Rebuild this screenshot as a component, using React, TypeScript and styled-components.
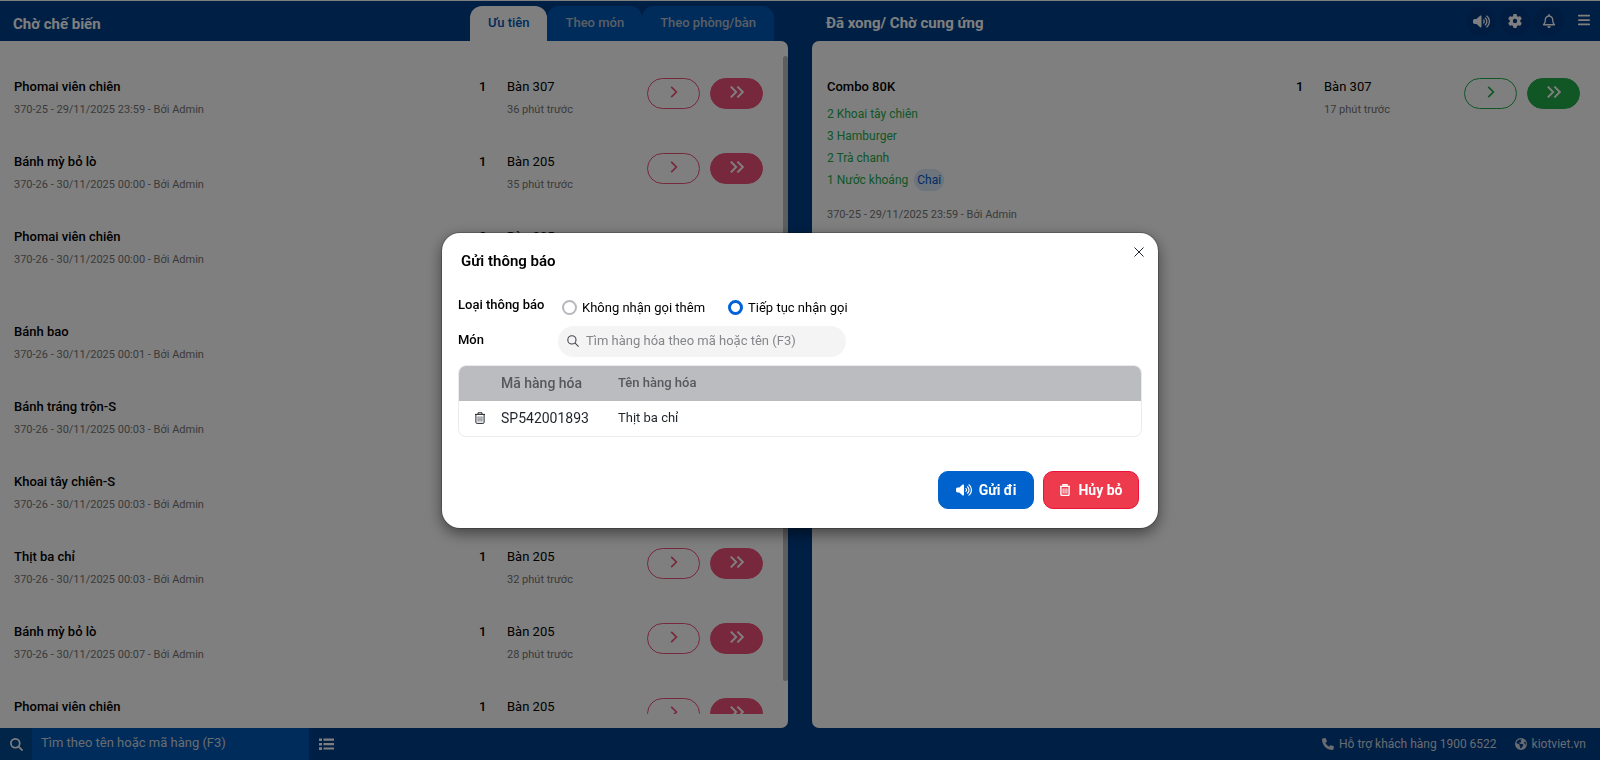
import React from 'react';
import styled, { createGlobalStyle, css } from 'styled-components';
import {
  FaBars,
  FaEarthAmericas,
  FaGear,
  FaPhone,
  FaRegBell,
  FaVolumeHigh,
} from 'react-icons/fa6';

const GlobalStyle = createGlobalStyle`
  *, *::before, *::after { box-sizing: border-box; }
  html, body, #root { height: 100%; }
  body {
    margin: 0;
    font-family: Roboto, "Liberation Sans", sans-serif;
    font-size: 13px;
    line-height: 20px;
    color: #000;
    background: #003e8a;
  }
  button, input { font: inherit; }
  button { padding: 0; border: 0; background: none; cursor: pointer; }
  h1, h2, h3, p, ul { margin: 0; padding: 0; }
  svg { display: block; flex: none; }
`;

const Page = styled.div`
  display: flex;
  flex-direction: column;
  height: 100vh;
  border-top: 1px solid #fff;
  overflow: hidden;
`;

const Columns = styled.main`
  flex: 1;
  min-height: 0;
  display: grid;
  grid-template-columns: 1fr 1fr;
  gap: 24px;
`;

const Column = styled.section`
  display: flex;
  flex-direction: column;
  min-width: 0;
  min-height: 0;
`;

const Header = styled.header<{ $side: 'left' | 'right' }>`
  flex: none;
  height: 40px;
  display: flex;
  align-items: center;
  justify-content: space-between;
  padding: ${(p) => (p.$side === 'left' ? '5px 14px 0 13px' : '0 8px 0 14px')};
`;

const Heading = styled.h1<{ $side: 'left' | 'right' }>`
  padding-top: ${(p) => (p.$side === 'left' ? '0' : '3px')};
  font-size: 15px;
  font-weight: 700;
  color: #fff;
`;

const Tabs = styled.div`
  display: flex;
  align-self: stretch;
`;

const Tab = styled.button<{ $active?: boolean }>`
  padding: 0 18px 2px;
  border-radius: 12px 12px 0 0;
  font-weight: 500;
  color: ${(p) => (p.$active ? '#0058b6' : '#b4bfcc')};
  background: ${(p) => (p.$active ? '#fff' : '#0058b6')};
`;

const HeaderTools = styled.div`
  display: flex;
  align-items: center;
  gap: 4px;
`;

const RoundTool = styled.button`
  display: grid;
  place-items: center;
  width: 30px;
  height: 30px;
  border-radius: 50%;
  color: #fff;
  background: #003a82;
`;

const MenuTool = styled.button`
  display: grid;
  place-items: center;
  width: 16px;
  height: 30px;
  padding-bottom: 3px;
  margin-left: 8px;
  color: #fff;
`;

const Panel = styled.div<{ $side: 'left' | 'right' }>`
  flex: 1;
  min-height: 0;
  display: flex;
  padding: 15px 0 14px;
  background: #fff;
  border-radius: ${(p) => (p.$side === 'left' ? '0 7px 7px 0' : '7px 0 0 7px')};
`;

const Orders = styled.ul<{ $side: 'left' | 'right' }>`
  flex: 1;
  min-width: 0;
  overflow: hidden;
  list-style: none;
  padding: 11px 0 0 ${(p) => (p.$side === 'left' ? '14px' : '15px')};
`;

const ScrollTrack = styled.div`
  flex: none;
  width: 5px;
`;

const ScrollThumb = styled.div`
  height: 95%;
  border-radius: 3px;
  background: #bdbdbd;
`;

const Order = styled.li<{ $tall?: boolean }>`
  display: flex;
  align-items: flex-start;
  min-height: ${(p) => (p.$tall ? '95px' : '75px')};
  padding-top: 10px;
`;

const Dish = styled.div`
  flex: 1;
  min-width: 0;
`;

const Name = styled.h3`
  font-size: 13px;
  font-weight: 500;
`;

const Meta = styled.p`
  margin-top: 3px;
  font-size: 11px;
  color: #757575;
`;

const Quantity = styled.div`
  width: 28px;
  font-weight: 500;
`;

const Place = styled.div`
  width: 140px;
`;

const Actions = styled.div<{ $tall?: boolean }>`
  display: flex;
  gap: 10px;
  padding-top: ${(p) => (p.$tall ? '11px' : '1px')};
  padding-right: 20px;
`;

const tones = { pink: '#f0507a', green: '#22ac4b' };

const Pill = styled.button<{ $tone: 'pink' | 'green'; $filled?: boolean }>`
  display: grid;
  place-items: center;
  width: 53px;
  height: 31px;
  padding-bottom: 4px;
  border-radius: 16px;
  border: 1px solid ${(p) => tones[p.$tone]};
  color: ${(p) => (p.$filled ? '#fff' : tones[p.$tone])};
  background: ${(p) => (p.$filled ? tones[p.$tone] : 'transparent')};
`;

const ComboItems = styled.ul`
  list-style: none;
  padding-top: 6px;
  font-size: 12px;
  color: #22ac4b;
`;

const ComboItem = styled.li`
  display: flex;
  align-items: center;
  gap: 6px;
  min-height: 22px;
`;

const Unit = styled.span`
  padding: 0 3px;
  border-radius: 11px;
  line-height: 22px;
  color: #0058c8;
  background: #dce8f8;
`;

const ComboMeta = styled(Meta)`
  margin-top: 14px;
`;

const Footer = styled.footer`
  flex: none;
  height: 32px;
  display: flex;
  align-items: center;
  color: #fff;
`;

const FooterSearch = styled.label`
  display: flex;
  align-self: stretch;
  width: 309px;
  background: #004a90;
`;

const FooterSearchIcon = styled.span`
  display: grid;
  place-items: center;
  width: 32px;
`;

const FooterInput = styled.input`
  flex: 1;
  min-width: 0;
  padding: 0 9px 2px;
  border: 0;
  outline: 0;
  color: #fff;
  background: #0058b6;
  &::placeholder { color: #d2d8e0; opacity: 1; }
`;

const ListButton = styled.button`
  margin-left: 10px;
  color: #fff;
`;

const Support = styled.div`
  margin-left: auto;
  padding-right: 14px;
  display: flex;
  gap: 18px;
  font-size: 12px;
`;

const SupportLink = styled.a`
  display: flex;
  align-items: center;
  gap: 5px;
  color: #d2d8e0;
  text-decoration: none;
`;

const Backdrop = styled.div`
  position: fixed;
  inset: 0;
  display: grid;
  place-items: center;
  background: rgba(0, 0, 0, 0.5);
`;

const Dialog = styled.div`
  position: relative;
  width: 716px;
  max-width: 100%;
  padding: 18px 16px 19px;
  border-radius: 18px;
  background: #fff;
  box-shadow: 0 0 0 1px rgba(0, 0, 0, 0.2), 0 5px 15px rgba(0, 0, 0, 0.5);
`;

const DialogTitle = styled.h2`
  padding-left: 3px;
  font-size: 15px;
  font-weight: 600;
  line-height: 20px;
`;

const Close = styled.button`
  position: absolute;
  top: 11px;
  right: 11px;
  padding: 3px;
`;

const Field = styled.div`
  display: flex;
  align-items: flex-start;
`;

const FieldName = styled.span`
  width: 100px;
  font-weight: 500;
`;

const KindField = styled(Field)`
  margin-top: 24px;
`;

const SearchField = styled(Field)`
  margin-top: 8px;
  line-height: 28px;
`;

const Choices = styled.div`
  display: flex;
  gap: 23px;
  padding: 3px 0 0 4px;
`;

const Choice = styled.label`
  display: flex;
  align-items: center;
  gap: 5px;
`;

const Radio = styled.input`
  appearance: none;
  width: 15px;
  height: 15px;
  margin: 0;
  border: 2px solid #b7b8bc;
  border-radius: 50%;
  background: #fff;
  &:checked { border: 3px solid #0062d6; }
`;

const SearchBox = styled.label`
  display: flex;
  align-items: center;
  gap: 7px;
  width: 288px;
  height: 31px;
  padding: 0 9px;
  border-radius: 16px;
  color: #43464d;
  background: #f4f4f4;
`;

const SearchInput = styled.input`
  flex: 1;
  min-width: 0;
  padding: 0 0 1px;
  border: 0;
  outline: 0;
  background: none;
  &::placeholder { color: #85868b; opacity: 1; }
`;

const TableFrame = styled.div`
  margin-top: 8px;
  border: 1px solid #ebebed;
  border-radius: 8px;
  overflow: hidden;
`;

const Table = styled.table`
  width: 100%;
  border-collapse: collapse;
  table-layout: fixed;
  color: #1f242b;
  th, td { height: 35px; padding: 0; text-align: left; }
  th { font-weight: 500; color: #55585e; background: #bbbcc0; }
`;

const codeText = css`
  width: 117px;
  font-size: 14px;
`;

const IconHead = styled.th`
  width: 42px;
`;

const CodeHead = styled.th`
  ${codeText}
`;

const CodeCell = styled.td`
  ${codeText}
`;

const RemoveButton = styled.button`
  display: block;
  margin-left: 15px;
  color: #1f242b;
`;

const DialogActions = styled.div`
  display: flex;
  justify-content: flex-end;
  gap: 9px;
  margin-top: 34px;
  padding-right: 3px;
`;

const ActionButton = styled.button<{ $danger?: boolean }>`
  display: flex;
  align-items: center;
  justify-content: center;
  gap: 7px;
  width: 96px;
  height: 38px;
  border: 1px solid ${(p) => (p.$danger ? '#ec1237' : '#0062cc')};
  border-radius: 10px;
  font-size: 14px;
  font-weight: 700;
  color: #fff;
  background: ${(p) => (p.$danger ? '#ee3a4d' : '#0062cc')};
`;

const ChevronIcon = () => (
  <svg width="8" height="12" viewBox="0 0 8 12" fill="none" stroke="currentColor" strokeWidth="1.7" aria-hidden>
    <path d="M1.2 0.8 6.4 6 1.2 11.2" />
  </svg>
);

const DoubleChevronIcon = () => (
  <svg width="14" height="12" viewBox="0 0 14 12" fill="none" stroke="currentColor" strokeWidth="1.9" aria-hidden>
    <path d="M0.8 0.6 6.2 6 0.8 11.4M7.4 0.6 12.8 6 7.4 11.4" />
  </svg>
);

const ListIcon = () => (
  <svg width="15" height="12" viewBox="0 0 15 12" fill="currentColor" aria-hidden>
    <path d="M0 0.5h3v2.6H0zM0 4.9h3v2.6H0zM0 9.3h3v2.6H0zM4.5 0.6h10.5v2.2H4.5zM4.5 5h10.5v2.2H4.5zM4.5 9.4h10.5v2.2H4.5z" />
  </svg>
);

const TrashIcon = ({ size = 12, weight = 1 }: { size?: number; weight?: number }) => (
  <svg width={size} height={size} viewBox="0 0 12 12" fill="none" stroke="currentColor" strokeWidth={weight} aria-hidden>
    <path d="M1 2.4h10M4 2.2V0.8h4v1.4M1.9 2.6v7.6q0 1.2 1.2 1.2h5.8q1.2 0 1.2-1.2V2.6" />
    <path d="M4.1 4.4v5.2M6 4.4v5.2M7.9 4.4v5.2" strokeWidth={weight * 0.7} />
  </svg>
);

const CloseIcon = () => (
  <svg width="10" height="10" viewBox="0 0 10 10" fill="none" stroke="#1f242b" strokeWidth="1" aria-hidden>
    <path d="M0.5 0.5 9.5 9.5M9.5 0.5 0.5 9.5" />
  </svg>
);

const SearchIcon = ({ size = 12, weight = 1.1 }: { size?: number; weight?: number }) => (
  <svg width={size} height={size} viewBox="0 0 12 12" fill="none" stroke="currentColor" strokeWidth={weight} aria-hidden>
    <circle cx="4.9" cy="4.9" r="4.1" />
    <path d="M7.9 7.9 11.6 11.6" />
  </svg>
);

type OrderData = {
  name: string;
  meta: string;
  quantity: number;
  place: string;
  ago: string;
  tall?: boolean;
};

const waiting: OrderData[] = [
  { name: 'Phomai viên chiên', meta: '370-25 - 29/11/2025 23:59 - Bởi Admin', quantity: 1, place: 'Bàn 307', ago: '36 phút trước' },
  { name: 'Bánh mỳ bỏ lò', meta: '370-26 - 30/11/2025 00:00 - Bởi Admin', quantity: 1, place: 'Bàn 205', ago: '35 phút trước' },
  { name: 'Phomai viên chiên', meta: '370-26 - 30/11/2025 00:00 - Bởi Admin', quantity: 2, place: 'Bàn 205', ago: '35 phút trước', tall: true },
  { name: 'Bánh bao', meta: '370-26 - 30/11/2025 00:01 - Bởi Admin', quantity: 1, place: 'Bàn 205', ago: '34 phút trước' },
  { name: 'Bánh tráng trộn-S', meta: '370-26 - 30/11/2025 00:03 - Bởi Admin', quantity: 1, place: 'Bàn 205', ago: '32 phút trước' },
  { name: 'Khoai tây chiên-S', meta: '370-26 - 30/11/2025 00:03 - Bởi Admin', quantity: 1, place: 'Bàn 205', ago: '32 phút trước' },
  { name: 'Thịt ba chỉ', meta: '370-26 - 30/11/2025 00:03 - Bởi Admin', quantity: 1, place: 'Bàn 205', ago: '32 phút trước' },
  { name: 'Bánh mỳ bỏ lò', meta: '370-26 - 30/11/2025 00:07 - Bởi Admin', quantity: 1, place: 'Bàn 205', ago: '28 phút trước' },
  { name: 'Phomai viên chiên', meta: '370-26 - 30/11/2025 00:07 - Bởi Admin', quantity: 1, place: 'Bàn 205', ago: '28 phút trước' },
];

type OrderRowProps = {
  order: OrderData;
  side: 'left' | 'right';
  children?: React.ReactNode;
};

function OrderRow({ order, side, children }: OrderRowProps) {
  const tone = side === 'left' ? 'pink' : 'green';
  return (
    <Order $tall={order.tall}>
      <Dish>
        <Name>{order.name}</Name>
        {children ?? <Meta>{order.meta}</Meta>}
      </Dish>
      <Quantity>{order.quantity}</Quantity>
      <Place>
        {order.place}
        <Meta>{order.ago}</Meta>
      </Place>
      <Actions $tall={order.tall}>
        <Pill $tone={tone} aria-label="Chuyển một phần">
          <ChevronIcon />
        </Pill>
        <Pill $tone={tone} $filled aria-label="Chuyển tất cả">
          <DoubleChevronIcon />
        </Pill>
      </Actions>
    </Order>
  );
}

function NotifyDialog() {
  return (
    <Backdrop>
      <Dialog role="dialog" aria-modal="true" aria-labelledby="notify-title">
        <DialogTitle id="notify-title">Gửi thông báo</DialogTitle>
        <Close aria-label="Đóng">
          <CloseIcon />
        </Close>
        <KindField role="radiogroup" aria-labelledby="notify-kind">
          <FieldName id="notify-kind">Loại thông báo</FieldName>
          <Choices>
            <Choice>
              <Radio type="radio" name="kind" />
              Không nhận gọi thêm
            </Choice>
            <Choice>
              <Radio type="radio" name="kind" defaultChecked />
              Tiếp tục nhận gọi
            </Choice>
          </Choices>
        </KindField>
        <SearchField>
          <FieldName id="dish-label">Món</FieldName>
          <SearchBox>
            <SearchIcon />
            <SearchInput aria-labelledby="dish-label" placeholder="Tìm hàng hóa theo mã hoặc tên (F3)" />
          </SearchBox>
        </SearchField>
        <TableFrame>
          <Table>
            <thead>
              <tr>
                <IconHead />
                <CodeHead>Mã hàng hóa</CodeHead>
                <th>Tên hàng hóa</th>
              </tr>
            </thead>
            <tbody>
              <tr>
                <td>
                  <RemoveButton aria-label="Xóa">
                    <TrashIcon />
                  </RemoveButton>
                </td>
                <CodeCell>SP542001893</CodeCell>
                <td>Thịt ba chỉ</td>
              </tr>
            </tbody>
          </Table>
        </TableFrame>
        <DialogActions>
          <ActionButton>
            <FaVolumeHigh size={16} />
            Gửi đi
          </ActionButton>
          <ActionButton $danger>
            <TrashIcon weight={1.4} />
            Hủy bỏ
          </ActionButton>
        </DialogActions>
      </Dialog>
    </Backdrop>
  );
}

export default function App() {
  return (
    <>
      <GlobalStyle />
      <Page>
        <Columns>
          <Column>
            <Header $side="left">
              <Heading $side="left">Chờ chế biến</Heading>
              <Tabs role="tablist">
                <Tab role="tab" aria-selected $active>Ưu tiên</Tab>
                <Tab role="tab">Theo món</Tab>
                <Tab role="tab">Theo phòng/bàn</Tab>
              </Tabs>
            </Header>
            <Panel $side="left">
              <Orders $side="left">
                {waiting.map((order, i) => (
                  <OrderRow key={i} order={order} side="left" />
                ))}
              </Orders>
              <ScrollTrack>
                <ScrollThumb />
              </ScrollTrack>
            </Panel>
          </Column>
          <Column>
            <Header $side="right">
              <Heading $side="right">Đã xong/ Chờ cung ứng</Heading>
              <HeaderTools>
                <RoundTool aria-label="Âm thanh"><FaVolumeHigh size={17} /></RoundTool>
                <RoundTool aria-label="Thiết lập"><FaGear size={14} /></RoundTool>
                <RoundTool aria-label="Thông báo"><FaRegBell size={14} /></RoundTool>
                <MenuTool aria-label="Menu"><FaBars size={14} /></MenuTool>
              </HeaderTools>
            </Header>
            <Panel $side="right">
              <Orders $side="right">
                <OrderRow
                  side="right"
                  order={{ name: 'Combo 80K', meta: '', quantity: 1, place: 'Bàn 307', ago: '17 phút trước' }}
                >
                  <ComboItems>
                    <ComboItem>2 Khoai tây chiên</ComboItem>
                    <ComboItem>3 Hamburger</ComboItem>
                    <ComboItem>2 Trà chanh</ComboItem>
                    <ComboItem>
                      1 Nước khoáng <Unit>Chai</Unit>
                    </ComboItem>
                  </ComboItems>
                  <ComboMeta>370-25 - 29/11/2025 23:59 - Bởi Admin</ComboMeta>
                </OrderRow>
              </Orders>
            </Panel>
          </Column>
        </Columns>
        <Footer>
          <FooterSearch>
            <FooterSearchIcon><SearchIcon size={13} weight={1.6} /></FooterSearchIcon>
            <FooterInput aria-label="Tìm kiếm" placeholder="Tìm theo tên hoặc mã hàng (F3)" />
          </FooterSearch>
          <ListButton aria-label="Danh sách"><ListIcon /></ListButton>
          <Support>
            <SupportLink href="#support"><FaPhone size={12} />Hỗ trợ khách hàng 1900 6522</SupportLink>
            <SupportLink href="#site"><FaEarthAmericas size={12} />kiotviet.vn</SupportLink>
          </Support>
        </Footer>
      </Page>
      <NotifyDialog />
    </>
  );
}
